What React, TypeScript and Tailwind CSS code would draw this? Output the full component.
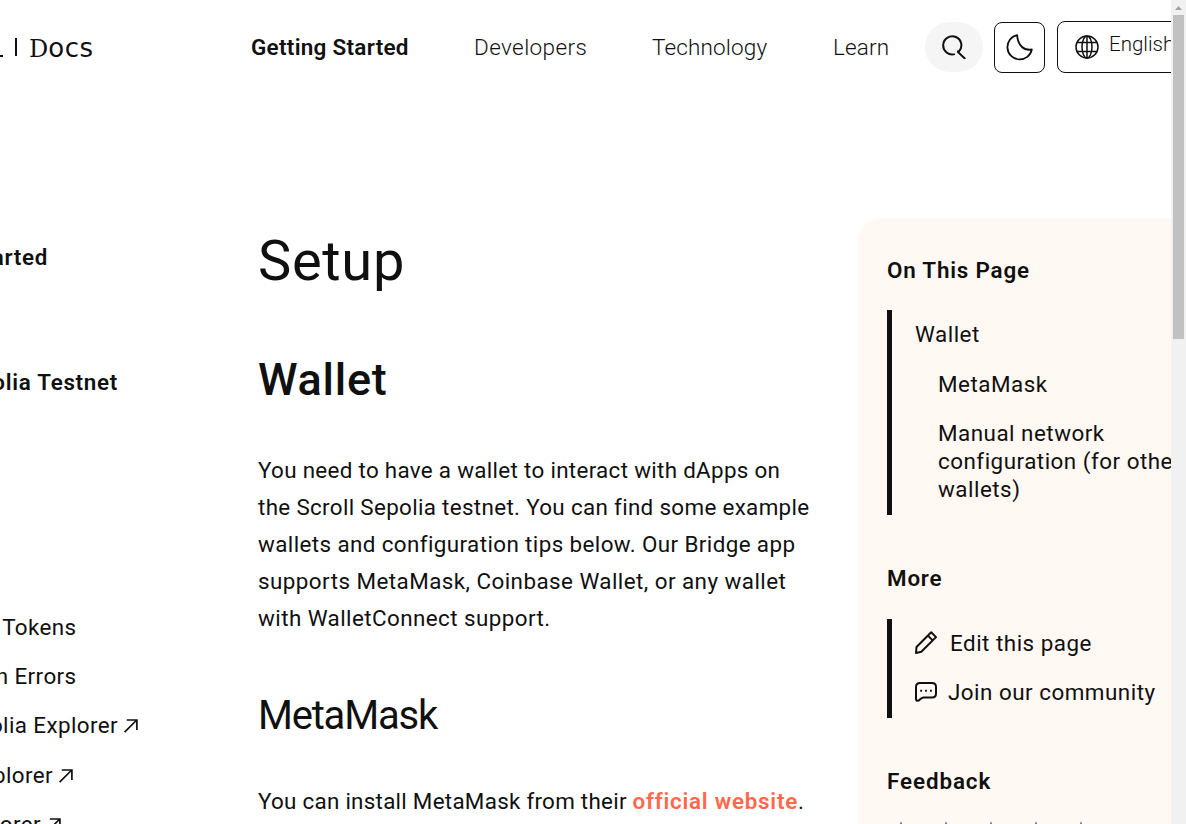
import React from "react";

function ArrowUpRight() {
  return (
    <svg className="ml-[6px] mr-px h-[14px] w-[14px] shrink-0" viewBox="0 0 14 14" fill="none" stroke="#101010" strokeWidth="1.7">
      <path d="M.6 13.2 12.8 1M2.8 1H12.9V11" />
    </svg>
  );
}

function SideLink({ label, width, external }: { label: string; width: string; external?: boolean }) {
  return (
    <li className={`flex h-[49.3px] shrink-0 items-center justify-end whitespace-nowrap tracking-[0.4px] ${width}`}>
      <span>{label}</span>
      {external && <ArrowUpRight />}
    </li>
  );
}

function Star() {
  return (
    <svg className="h-8 w-8" viewBox="0 0 24 24" fill="none" stroke="#7c7672" strokeWidth="1.2">
      <path d="M12 2.400 15 9.500h8l-6.300 4.800L19 22.500l-7-5-7 5 2.300-8.200L1 9.500h8z" />
    </svg>
  );
}

function Header() {
  return (
    <header className="flex h-[94px] shrink-0 items-center">
      <div className="flex w-[251px] shrink-0 items-center">
        <div className="h-[19px] w-[3px] border-b-2 border-[#101010]" />
        <div className="ml-3 h-[18px] w-[2px] bg-[#101010]" />
        <div className="ml-[12px] mt-px flex items-baseline leading-none">
          <span className="font-['DejaVu_Serif',serif] text-[24px]">D</span>
          <span className="font-['DejaVu_Sans',sans-serif] text-[26px] tracking-[0.500px]">ocs</span>
        </div>
      </div>
      <nav className="mt-[2px] flex shrink-0 whitespace-nowrap text-[22.500px]">
        <a className="w-[223px] font-semibold tracking-[0.27px]">Getting Started</a>
        <a className="w-[178px] font-[350] tracking-[0.4px]">Developers</a>
        <a className="w-[181px] font-[350] tracking-[0.15px]">Technology</a>
        <a className="w-[92px] font-[350] tracking-[0.15px]">Learn</a>
      </nav>
      <button className="flex h-[50px] w-[58px] shrink-0 items-center justify-center rounded-[25px] bg-[#f5f5f5]">
        <svg className="mr-px h-6 w-6" viewBox="0 0 24 24" fill="none" stroke="#101010" strokeWidth="2">
          <path d="M12.800 19.100A9.100 9.100 0 1 1 16.900 16.600M16.300 15.400 15.900 17 23.300 24" />
        </svg>
      </button>
      <button className="ml-[11px] mt-px flex h-[51px] w-[51px] shrink-0 items-center justify-center rounded-lg border border-[#101010]">
        <svg className="mr-px h-[27px] w-[27px]" viewBox="0 0 27 27" fill="none" stroke="#101010" strokeWidth="1.800" strokeLinejoin="round">
          <path d="M11.100 1.100A12.300 12.300 0 1 0 25.800 15.500C18 17 11.800 11.500 11.100 1.100Z" />
        </svg>
      </button>
      <button className="ml-[12px] flex h-[52px] w-[140px] shrink-0 items-center rounded-lg border border-[#101010] pl-[17px]">
        <svg className="h-6 w-6 shrink-0" viewBox="0 0 24 24" fill="none" stroke="#101010" strokeWidth="1.500">
          <circle cx="12" cy="12" r="11" />
          <ellipse cx="12" cy="12" rx="5" ry="11" />
          <path d="M12 1v22M2 7.500h20M2 16.500h20" />
        </svg>
        <span className="ml-[10px] mb-[5px] text-[20.500px] font-light">English</span>
      </button>
    </header>
  );
}

function Sidebar() {
  return (
    <aside className="flex w-[258px] shrink-0 flex-col pt-[139px]">
      <div className="flex h-[49px] w-[48px] items-center justify-end font-semibold tracking-[0.7px]">Started</div>
      <div className="mt-[76px] flex h-[49px] w-[118px] items-center justify-end whitespace-nowrap font-semibold tracking-[0.7px]">Sepolia Testnet</div>
      <ul className="mt-[196px] flex flex-col">
        <SideLink label="Tokens" width="w-[76.5px]" />
        <SideLink label="Transaction Errors" width="w-[76.5px]" />
        <SideLink label="Sepolia Explorer" width="w-[139px]" external />
        <SideLink label="Explorer" width="w-[74px]" external />
        <SideLink label="Explorer" width="w-[62px]" external />
      </ul>
    </aside>
  );
}

function Article() {
  return (
    <main className="w-[600px] shrink-0 bg-white">
      <h1 className="mt-[132px] h-[70px] text-[56px] leading-[70px] tracking-[0.7px]">Setup</h1>
      <h2 className="mt-[55px] h-[58px] text-[45px] font-medium leading-[58px] tracking-[0.7px]">Wallet</h2>
      <p className="mt-[43px] whitespace-nowrap leading-[37px]">
        <span className="tracking-[0.31px]">You need to have a wallet to interact with dApps on</span>
        <br />
        <span className="tracking-[0.33px]">the Scroll Sepolia testnet. You can find some example</span>
        <br />
        <span className="tracking-[0.4px]">wallets and configuration tips below. Our Bridge app</span>
        <br />
        <span className="tracking-[0.45px]">supports MetaMask, Coinbase Wallet, or any wallet</span>
        <br />
        <span className="tracking-[0.43px]">with WalletConnect support.</span>
      </p>
      <h3 className="mt-[53px] h-[52px] text-[40px] leading-[52px] tracking-[-1.2px]">MetaMask</h3>
      <p className="mt-[41px] whitespace-nowrap leading-[37px] tracking-[0.27px]">
        You can install MetaMask from their{" "}
        <a className="font-semibold tracking-[0.75px] text-[#ff684b]">official website</a>.
      </p>
    </main>
  );
}

function OnThisPage() {
  return (
    <aside className="mt-[124px] h-[700px] w-[340px] shrink-0 rounded-tl-[23px] bg-[#fff8f3] pl-[29px] tracking-[0.5px]">
      <h4 className="mt-[38px] h-[28px] font-semibold leading-[28px] tracking-[0.8px]">On This Page</h4>
      <ul className="mt-[26px] flex h-[205px] flex-col border-l-[5px] border-[#101010] pl-[23px] pt-[10px] leading-[28px]">
        <li>Wallet</li>
        <li className="mt-[22px] pl-[23px]">MetaMask</li>
        <li className="mt-[21px] whitespace-nowrap pl-[23px]">
          Manual network
          <br />
          configuration (for other
          <br />
          wallets)
        </li>
      </ul>
      <h4 className="mt-[49px] h-[28px] font-semibold leading-[28px] tracking-[0.8px]">More</h4>
      <ul className="mt-[27px] flex h-[99px] flex-col border-l-[5px] border-[#101010] pl-[23px] leading-[28px]">
        <li className="mt-[10px] flex items-center whitespace-nowrap">
          <svg className="mb-px h-[23px] w-[22px]" viewBox="0 0 22 23" fill="none" stroke="#101010" strokeWidth="2" strokeLinejoin="round">
            <path d="M1 22 1.500 16 16.200 1.300 21 6.100 6.300 20.800ZM12.900 4.600 17.700 9.400" />
          </svg>
          <span className="ml-[13px]">Edit this page</span>
        </li>
        <li className="mt-[21px] flex items-center whitespace-nowrap">
          <svg className="h-[20px] w-[22px]" viewBox="0 0 22 20" fill="none" stroke="#101010" strokeWidth="2" strokeLinejoin="round">
            <path d="M5 1H17Q21 1 21 5V11.500Q21 15.500 17 15.500H8.500Q6.500 15.800 5.200 17.200 3.500 19 1.900 18.800 1 18.500 1 17V5Q1 1 5 1Z" />
            <path d="M5.200 8.700h1.800M10.100 8.700h1.800M15 8.700h1.800" />
          </svg>
          <span className="ml-[11px]">Join our community</span>
        </li>
      </ul>
      <h4 className="mt-[49px] h-[28px] font-semibold leading-[28px] tracking-[0.9px]">Feedback</h4>
      <div className="-ml-[2px] mt-[25px] flex gap-[13px]">
        <Star />
        <Star />
        <Star />
        <Star />
        <Star />
      </div>
    </aside>
  );
}

function Scrollbar() {
  return (
    <div className="flex w-[15px] shrink-0 flex-col items-center bg-[#f1f1f1]">
      <svg className="h-[15px] w-[15px] shrink-0" viewBox="0 0 15 15">
        <path d="M4 10 7.500 6 11 10Z" fill="#a3a3a3" />
      </svg>
      <div className="h-[324px] w-[11px] bg-[#c1c1c1]" />
    </div>
  );
}

export default function App() {
  return (
    <div className="flex h-[824px] w-[1186px] overflow-hidden bg-white font-[Roboto,sans-serif] text-[22.4px] text-[#101010]">
      <div className="flex w-[1171px] shrink-0 flex-col overflow-hidden">
        <Header />
        <div className="flex">
          <Sidebar />
          <Article />
          <OnThisPage />
        </div>
      </div>
      <Scrollbar />
    </div>
  );
}
